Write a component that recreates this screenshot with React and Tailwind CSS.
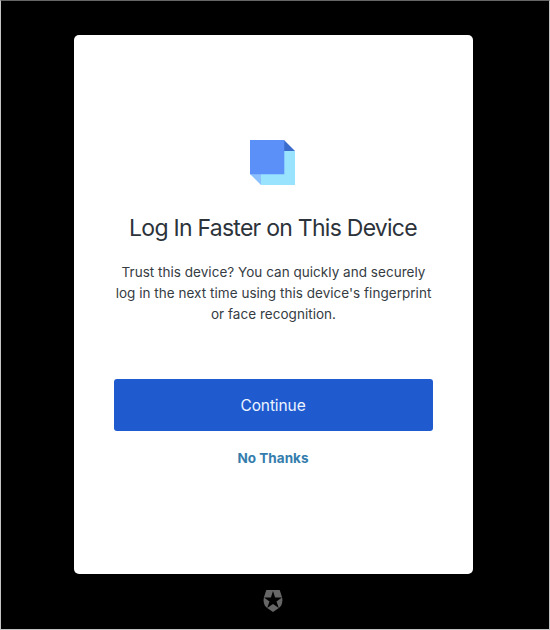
function DeviceIcon() {
  return (
    <svg className="mr-[2px] block h-[45px] w-[45px]" viewBox="0 0 45 45" aria-hidden="true">
      <path d="M11 11H45V45H11Z" fill="#99e3ff" />
      <path d="M0 34H11V45Z" fill="#8cc0ff" />
      <path d="M34 0L45 11H34Z" fill="#3b6bcb" />
      <path d="M0 0H34.3V34.3H0Z" fill="#5a90f8" />
    </svg>
  );
}

function ShieldLogo() {
  return (
    <svg className="mr-px block h-[22px] w-[20px]" viewBox="0 0 20 22" aria-hidden="true">
      <path
        d="M3.3 0H16.7L19 7C20.4 12.5 18 16.5 15.9 18L10 22L4.1 18C2 16.5-.4 12.5 1 7Z"
        fill="#666"
      />
      <path
        d="M10 1L12.1 7.4H19L13.5 11.5L15.8 18L10 14L4.2 18L6.5 11.5L1 7.4H7.9Z"
        fill="#000"
      />
    </svg>
  );
}

export default function App() {
  return (
    <main className="flex h-[630px] w-[550px] flex-col items-center border border-[#c4c4c4] border-t-[#666] bg-black pr-[3px] pt-[34px] font-['Inter','Liberation_Sans',sans-serif]">
      <section className="flex h-[539px] w-[399px] shrink-0 flex-col items-center rounded-[5px] bg-white px-10 pt-[105px]">
        <DeviceIcon />
        <h1 className="mt-[27px] whitespace-nowrap pr-px text-[23px] leading-8 tracking-[-0.74px] text-[#2d333a]">
          Log In Faster on This Device
        </h1>
        <p className="mt-[18px] whitespace-nowrap text-center text-[13.5px] leading-[21px] tracking-[0.03px] text-[#363c43]">
          Trust this device? You can quickly and securely
          <br />
          log in the next time using this device's fingerprint
          <br />
          or face recognition.
        </p>
        <button className="mt-[54px] h-[52px] w-[319px] shrink-0 rounded-[3px] bg-[#1f5bcf] pr-px pt-[2px] text-[15.5px] tracking-[-0.1px] text-[#edf4ff]">
          Continue
        </button>
        <button className="mt-[17px] pr-px text-[13.5px] leading-[21px] font-bold tracking-[0.02px] text-[#347dad]">No Thanks</button>
      </section>
      <footer className="mt-4">
        <ShieldLogo />
      </footer>
    </main>
  );
}
